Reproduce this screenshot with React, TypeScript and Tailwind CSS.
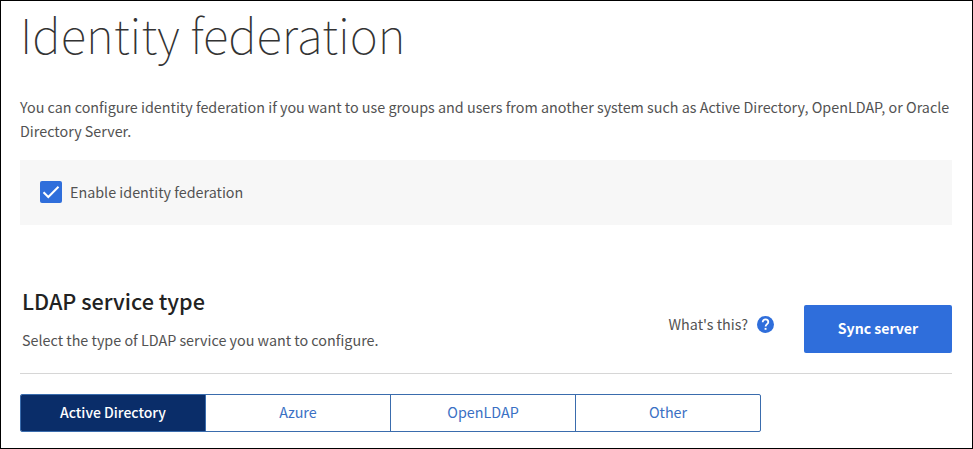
const serviceTypes = ['Active Directory', 'Azure', 'OpenLDAP', 'Other'];

export default function App() {
  return (
    <div className="flex h-[449px] w-[973px] flex-col overflow-hidden border border-black bg-white px-[19px] font-['Noto_Sans_CJK_SC','Source_Sans_Pro',sans-serif] text-[14.34px] text-[#525252]">
      <h1 className="mt-[3px] h-[60px] whitespace-nowrap text-[47.8px] leading-[60px] font-thin text-[#333]">Identity federation</h1>
      <p className="mt-[31px] h-[48px] whitespace-nowrap leading-[24px]">
        You can configure identity federation if you want to use groups and users from another system such as Active Directory, OpenLDAP, or Oracle
        <br />
        Directory Server.
      </p>
      <label className="mt-[17px] flex h-[65px] w-[932px] items-center bg-[#f7f7f7] pb-px pl-5">
        <span className="flex size-[22px] items-center justify-center rounded-[2px] bg-[#2f6edb]">
          <svg width="22" height="22" viewBox="0 0 22 22" fill="none" stroke="white" strokeWidth="2">
            <path d="M3.5 11.2 8.3 16 18.5 5.8" />
          </svg>
        </span>
        <span className="ml-2">Enable identity federation</span>
      </label>
      <section className="mt-[60px] flex h-[89px] w-[932px] border-b border-[#d6d6d6]">
        <div className="ml-[2px] flex-1">
          <h2 className="h-8 text-[21.6px] leading-8 font-medium text-[#222]">LDAP service type</h2>
          <p className="mt-[11px] leading-6">Select the type of LDAP service you want to configure.</p>
        </div>
        <div className="mt-[27px] flex h-6 items-center">
          <span>What's this?</span>
          <svg className="ml-[9px]" width="17" height="17" viewBox="0 0 17 17" fill="none">
            <circle cx="8.5" cy="8.5" r="8.5" fill="#2f6edb" />
            <path d="M5.7 6.2C5.7 4.3 6.9 3.3 8.5 3.3s2.8 1.1 2.8 2.7c0 2-2.7 2.3-2.7 4.6" stroke="white" strokeWidth="1.8" />
            <rect x="7.6" y="11.9" width="1.9" height="1.9" fill="white" />
          </svg>
        </div>
        <button className="mt-5 ml-[30px] h-12 w-[148px] rounded-[2px] bg-[#2f6edb] text-[14.1px] font-bold text-white">Sync server</button>
      </section>
      <div className="mt-5 flex h-[38px] w-[741px] overflow-hidden rounded-[2px] border border-[#3a6cad]">
        {serviceTypes.map((name, i) => (
          <button
            key={name}
            className={
              i === 0
                ? 'w-[185px] border-r border-[#3a6cad] bg-[#0a2d69] pb-px text-[14px] font-medium text-white'
                : 'w-[185px] border-r border-[#3a6cad] pb-[3px] text-[#3a70c4] last:w-[184px] last:border-r-0'
            }
          >
            {name}
          </button>
        ))}
      </div>
    </div>
  );
}
